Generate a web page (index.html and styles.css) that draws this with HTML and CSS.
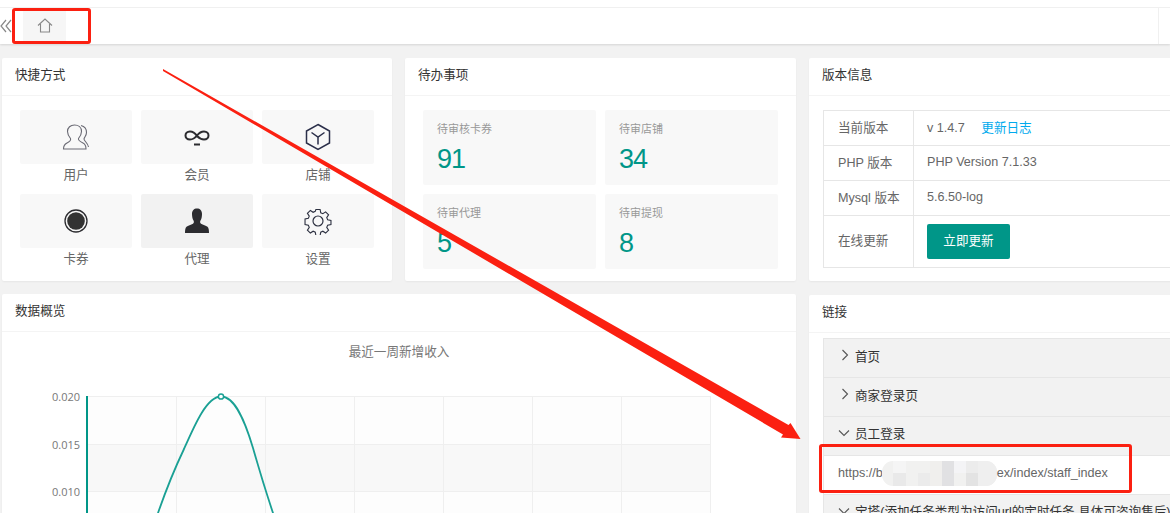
FILE: index.html
```html
<!DOCTYPE html>
<html lang="zh-CN">
<head>
    <meta charset="UTF-8">
    <meta name="viewport" content="width=device-width, initial-scale=1.0">
    <title>控制台</title>
    <link rel="stylesheet" href="styles.css">
</head>
<body>

<div class="topbar">
    <div class="collapse">
        <svg width="12" height="14" viewBox="0 0 12 14" fill="none" stroke="#888" stroke-width="1.2"><path d="M6 1 1 7l5 6M11 1 6 7l5 6"/></svg>
    </div>
    <div class="home-tab">
        <svg width="16" height="15" viewBox="0 0 16 15" fill="none" stroke="#888" stroke-width="1.1"><path d="M1 7.500 8 1l7 6.500M3.500 6v8h9V6"/></svg>
    </div>
    <div class="top-right"></div>
</div>

<div class="main">
    <div class="card">
        <div class="card-title">快捷方式</div>
        <div class="shortcuts">
            <a class="shortcut">
                <span class="tile">
                    <svg width="30" height="30" viewBox="0 0 30 30" fill="none" stroke="#6a6a74" stroke-width="1.100"><path d="M9.500 16.500C7.500 14 6.500 12 6.500 9.500 6.500 5.500 9.500 3 13.500 3s7 2.500 7 6.500c0 2.500-1 4.500-3 7-.5 1.500 1.500 3 4.500 4.500 2 1 3 3 3 6H2.500c0-3 1.500-5 3.500-6 3-1.500 4-3 3.500-4.500z"/><path d="M20 3.500c4 1 5.500 4.500 5.500 7 0 3-2 4.500-2.500 6.500 0 2 4 4 4.500 8"/></svg>
                </span>
                <span class="tile-name">用户</span>
            </a>
            <a class="shortcut">
                <span class="tile">
                    <svg width="26" height="18" viewBox="0 -1 26 18" fill="none" stroke="#2c2c30" stroke-width="2"><path d="M13 7C11 4 9 2.500 6 2.500 3 2.500 1.500 4.500 1.500 6.500S3 10.500 6 10.500c3 0 5-1.500 7-4 2-2.500 4-4 7-4s4.500 2 4.500 4-1.500 4-4.500 4c-3 0-5-1.500-7-3.500"/><path d="M10 15.500h6"/></svg>
                </span>
                <span class="tile-name">会员</span>
            </a>
            <a class="shortcut">
                <span class="tile">
                    <svg width="26" height="28" viewBox="0 0 26 28" fill="none" stroke="#2b2f4a" stroke-width="1.5"><path d="M13 1.500 24.500 8v12L13 26.500 1.500 20V8z"/><path d="M6.500 9.500 13 14l6.500-4.500M13 14v7.500"/></svg>
                </span>
                <span class="tile-name">店铺</span>
            </a>
            <a class="shortcut">
                <span class="tile">
                    <svg width="24" height="24" viewBox="0 0 24 24"><circle cx="12" cy="12" r="11" fill="none" stroke="#2c2c30" stroke-width="1.300"/><circle cx="12" cy="12" r="8.800" fill="#333"/></svg>
                </span>
                <span class="tile-name">卡券</span>
            </a>
            <a class="shortcut active">
                <span class="tile">
                    <svg width="26" height="26" viewBox="0 0 26 26" fill="#2c2c30"><path d="M13 .5c3 0 5 2 5 5.500 0 2.500-.5 5-1.500 6.500-.7 1.200-.5 2.500.5 3.200 2 1 5 1.800 6.500 3 1.200 1 1.500 3.500 1.500 6.300H1c0-2.800.3-5.300 1.500-6.300 1.500-1.200 4.500-2 6.500-3 1-.7 1.200-2 .5-3.200C8.500 11 8 8.500 8 6 8 2.500 10 .5 13 .5z"/></svg>
                </span>
                <span class="tile-name">代理</span>
            </a>
            <a class="shortcut">
                <span class="tile">
                    <svg width="28" height="28" viewBox="0 0 28 28" fill="none" stroke="#2c3040" stroke-width="1.200"><circle cx="14" cy="14" r="5"/><path d="M11.700 1.500h4.600l.7 3.600 2.300 1 3-2 3.200 3.200-2 3 1 2.300 3.600.7v4.600l-3.600.7-1 2.300 2 3-3.200 3.200-3-2-2.300 1-.7 3.600h-4.600l-.7-3.600-2.300-1-3 2-3.200-3.200 2-3-1-2.300-3.600-.7V11.700l3.600-.7 1-2.300-2-3L5.700 2.500l3 2 2.300-1z" transform="translate(14 14) scale(.92) translate(-14 -14)"/></svg>
                </span>
                <span class="tile-name">设置</span>
            </a>
        </div>
    </div>

    <div class="card">
        <div class="card-title">待办事项</div>
        <div class="todos">
            <div class="todo"><p>待审核卡券</p><h3>91</h3></div>
            <div class="todo"><p>待审店铺</p><h3>34</h3></div>
            <div class="todo"><p>待审代理</p><h3>5</h3></div>
            <div class="todo"><p>待审提现</p><h3>8</h3></div>
        </div>
    </div>

    <div class="card">
        <div class="card-title">版本信息</div>
        <div class="version-body">
            <table class="version">
                <tr class="row-line"><td class="label">当前版本</td><td>v 1.4.7 <a class="log-link">更新日志</a></td></tr>
                <tr class="row-line"><td class="label">PHP 版本</td><td>PHP Version 7.1.33</td></tr>
                <tr class="row-line"><td class="label">Mysql 版本</td><td>5.6.50-log</td></tr>
                <tr class="row-tall"><td class="label">在线更新</td><td><a class="btn">立即更新</a></td></tr>
            </table>
        </div>
    </div>

    <div class="card card-chart">
        <div class="card-title">数据概览</div>
        <div class="chart-title">最近一周新增收入</div>
        <div class="chart">
            <div class="y-labels">
                <span>0.020</span>
                <span>0.015</span>
                <span>0.010</span>
            </div>
            <svg class="plot" width="640" height="140" viewBox="0 0 640 140">
                <rect x="0" y="0" width="624" height="48" fill="#fdfdfd"/>
                <rect x="0" y="48" width="624" height="47" fill="#f8f8f8"/>
                <rect x="0" y="95" width="624" height="45" fill="#fdfdfd"/>
                <path d="M0 .5h624M0 48.500h624M0 95.500h624M89.500 0v140M178.500 0v140M267.500 0v140M356.500 0v140M445.500 0v140M534.500 0v140M623.500 0v140" stroke="#efefef" fill="none"/>
                <path d="M65 134C67 128 69 123 71 117 79 94 87 74 97 53 108 28 120 .5 134 .5 148 .5 158 25 166 52 172 73 179 96 186 117 188 123 190 129 192 135" fill="none" stroke="#1aa094" stroke-width="1.800"/>
                <circle cx="134" cy="0.500" r="2.600" fill="#fff" stroke="#1aa094" stroke-width="1.500"/>
                <path d="M0 0v140" stroke="#009688" stroke-width="2"/>
            </svg>
        </div>
    </div>

    <div class="card card-links">
        <div class="card-title">链接</div>
        <div class="accordion">
            <div class="acc-head"><svg width="8" height="12" viewBox="0 0 8 12" fill="none" stroke="#555" stroke-width="1.100"><path d="M1.500 1l5 5-5 5"/></svg>首页</div>
            <div class="acc-head"><svg width="8" height="12" viewBox="0 0 8 12" fill="none" stroke="#555" stroke-width="1.100"><path d="M1.500 1l5 5-5 5"/></svg>商家登录页</div>
            <div class="acc-head open"><svg width="12" height="8" viewBox="0 0 12 8" fill="none" stroke="#555" stroke-width="1.100"><path d="M1 1.500l5 5 5-5"/></svg>员工登录</div>
            <div class="acc-body">https://b<svg class="mosaic" width="115" height="25" viewBox="2 0 115 25">
                    <defs><clipPath id="pill"><rect x="2" width="115" height="25" rx="11"/></clipPath></defs>
                    <g clip-path="url(#pill)">
                        <rect width="117" height="25" fill="#f1f1f0"/>
                        <rect x="13" width="13" height="12" fill="#f5f5f5"/>
                        <rect x="13" y="12" width="13" height="13" fill="#e9e9e9"/>
                        <rect x="38" y="12" width="12" height="13" fill="#ebebeb"/>
                        <rect x="50" width="12" height="25" fill="#f0efed"/>
                        <rect x="62" width="12" height="25" fill="#e1e1e3"/>
                        <rect x="74" width="12" height="12" fill="#f4f4f6"/>
                        <rect x="86" y="12" width="12" height="13" fill="#e3e3e3"/>
                        <rect x="86" width="12" height="12" fill="#ececec"/>
                        <rect x="98" width="19" height="25" fill="#efefef"/>
                    </g>
                </svg>ex/index/staff_index</div>
            <div class="acc-head open"><svg width="12" height="8" viewBox="0 0 12 8" fill="none" stroke="#555" stroke-width="1.100"><path d="M1 1.500l5 5 5-5"/></svg>宝塔(添加任务类型为访问url的定时任务 具体可咨询售后)</div>
        </div>
    </div>
</div>

<!-- red markup drawn on top of the screenshot -->
<div class="mark mark-home"></div>
<div class="mark mark-url"></div>
<svg class="arrow" width="1170" height="513" viewBox="0 0 1170 513">
    <path d="M163 69 788.500 425 790.500 423 800.500 439 781 437.500 783 434.500 163 71z" fill="#fb2011"/>
</svg>

</body>
</html>
```

FILE: styles.css
```css
html, body {
    height: 513px;
    overflow: hidden;
}
body {
    margin: 0;
    font-family: "Liberation Sans", "Noto Sans CJK SC", sans-serif;
    font-size: 12.6px;
    background-color: #f2f2f2;
    color: #666;
    position: relative;
}
.topbar {
    display: flex;
    align-items: stretch;
    height: 37px;
    padding-top: 7px;
    background-color: #fff;
    box-shadow: 0 1px 2px rgba(0, 0, 0, 0.12);
    position: relative;
}
.topbar::before {
    content: "";
    position: absolute;
    top: 7px;
    left: 0;
    right: 0;
    height: 1px;
    background-color: #f0f0f0;
}
.collapse {
    width: 23px;
    display: flex;
    align-items: center;
}
.home-tab {
    width: 43px;
    margin: 3px 0;
    background-color: #f6f6f6;
    display: flex;
    align-items: center;
    justify-content: center;
}
.top-right {
    margin-left: auto;
    margin-top: 1px;
    width: 11px;
    border-left: 1px solid #f0f0f0;
}
.main {
    display: grid;
    grid-template-columns: 390px 391px 380px;
    grid-template-rows: 223px 400px;
    gap: 13px;
    padding: 14px 0 0 2px;
}
.card {
    background-color: #fff;
    border-radius: 2px;
    box-shadow: 0 1px 2px rgba(0, 0, 0, 0.05);
}
.card-title {
    height: 37px;
    line-height: 35px;
    padding-left: 13px;
    color: #333;
    border-bottom: 1px solid #f4f4f4;
}
.shortcuts {
    display: grid;
    grid-template-columns: repeat(3, 112px);
    column-gap: 9px;
    padding: 14px 0 0 18px;
}
.shortcut {
    display: block;
    height: 84px;
    text-align: center;
}
.tile {
    height: 54px;
    display: flex;
    align-items: center;
    justify-content: center;
    background-color: #f8f8f8;
    border-radius: 2px;
}
.shortcut.active .tile {
    background-color: #f2f2f2;
}
.tile-name {
    display: block;
    line-height: 22px;
    color: #666;
}
.todos {
    display: grid;
    grid-template-columns: repeat(2, 173px);
    grid-auto-rows: 75px;
    gap: 9px;
    padding: 14px 0 0 18px;
}
.todo {
    background-color: #f8f8f8;
    border-radius: 2px;
    padding: 11px 14px;
    box-sizing: border-box;
}
.todo p {
    margin: 0;
    font-size: 11px;
    line-height: 16px;
    color: #999;
}
.todo h3 {
    margin: 4px 0 0;
    font-size: 27px;
    font-weight: normal;
    line-height: 36px;
    letter-spacing: -1px;
    color: #009688;
}
.version-body {
    padding: 14px 0 0 14px;
}
.version {
    width: 400px;
    table-layout: fixed;
    border-collapse: collapse;
    color: #666;
}
.version td {
    border: 1px solid #e6e6e6;
    padding: 0 13px;
    white-space: nowrap;
}
.version .label {
    width: 62px;
    padding-left: 14px;
}
.row-line td {
    height: 31px;
    padding-bottom: 3px;
}
.row-tall td {
    height: 51px;
}
.row-tall .label {
    height: 47px;
    padding-bottom: 4px;
}
.log-link {
    color: #01aaed;
    margin-left: 13px;
}
.btn {
    display: block;
    width: 83px;
    height: 35px;
    line-height: 35px;
    text-align: center;
    background-color: #009688;
    color: #fff;
    border-radius: 2px;
}
.card-chart {
    grid-column: 1 / 3;
}
.chart-title {
    text-align: center;
    color: #777;
    line-height: 18px;
    margin-top: 11px;
}
.chart {
    display: flex;
    margin-top: 35px;
    padding-left: 50px;
}
.y-labels {
    width: 28px;
    margin-right: 7px;
    margin-top: -7px;
    display: flex;
    flex-direction: column;
    font-family: "Open Sans", sans-serif;
    font-size: 11px;
    color: #777;
    text-align: right;
}
.y-labels span {
    height: 47.5px;
    line-height: 15px;
}
.plot {
    overflow: visible;
    flex-shrink: 0;
}
.card-links {
    margin-top: 1px;
}
.accordion {
    margin: 5px 0 0 14px;
    border-left: 1px solid #e6e6e6;
    border-top: 1px solid #e6e6e6;
    width: 400px;
}
.acc-head {
    height: 32px;
    padding-bottom: 6px;
    padding-left: 17px;
    background-color: #f2f2f2;
    border-bottom: 1px solid #e6e6e6;
    color: #333;
    display: flex;
    align-items: center;
    gap: 6px;
    white-space: nowrap;
}
.acc-head.open {
    gap: 5px;
    height: 31px;
    padding-bottom: 7px;
    padding-left: 14px;
    border-bottom: 0;
}
.acc-body {
    height: 34px;
    padding-bottom: 4px;
    padding-left: 14px;
    background-color: #fff;
    border-top: 1px solid #e6e6e6;
    border-bottom: 1px solid #e6e6e6;
    display: flex;
    align-items: center;
    color: #666;
}
.mosaic {
    flex-shrink: 0;
    margin-left: -1px;
}
.mark {
    position: absolute;
    border: 3px solid #fb2011;
    border-radius: 3px;
    box-sizing: border-box;
}
.mark-home {
    left: 12px;
    top: 8px;
    width: 79px;
    height: 36px;
}
.mark-url {
    left: 819px;
    top: 444px;
    width: 313px;
    height: 49px;
}
.arrow {
    position: absolute;
    left: 0;
    top: 0;
    pointer-events: none;
}
```
